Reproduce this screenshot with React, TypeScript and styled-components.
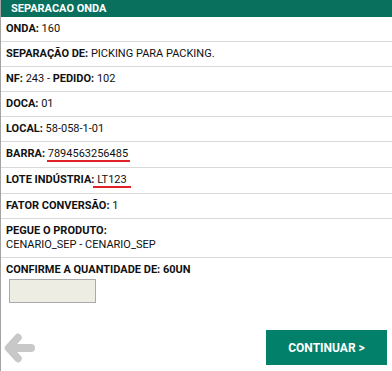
import styled, { createGlobalStyle } from "styled-components";

const GlobalStyle = createGlobalStyle`
  html, body {
    margin: 0;
    padding: 0;
    background: #fff;
  }
  body {
    font-family: Roboto, "Liberation Sans", Arial, sans-serif;
  }
`;

const Page = styled.div`
  min-height: 371px;
  box-sizing: border-box;
  border-left: 1px solid #a3a3a3;
  background: #fff;
`;

const Header = styled.div`
  height: 17px;
  line-height: 17px;
  padding-left: 10px;
  background: #08705c;
  color: #fff;
  font-size: 11px;
  font-weight: 700;
`;

const Row = styled.div<{ $last?: boolean }>`
  padding: 5px 5px;
  border-bottom: ${({ $last }) => ($last ? "none" : "1px solid #d9d9d9")};
  font-size: 11px;
  line-height: 14px;
  color: #111;
`;

const Label = styled.b`
  font-weight: 700;
`;

const Marked = styled.span<{ $before: number; $after: number }>`
  display: inline-block;
  line-height: 12px;
  padding: 0 ${({ $after }) => $after}px 0 ${({ $before }) => $before}px;
  margin-left: ${({ $before }) => -$before}px;
  border-bottom: 2px solid #e0202a;
`;

const QtyInput = styled.input`
  display: block;
  box-sizing: border-box;
  width: 87px;
  height: 24px;
  margin: 2px 0 0 3px;
  background: #eeede3;
  border: 1px solid #aaa;
  outline: none;
`;

const Footer = styled.div`
  display: flex;
  justify-content: space-between;
  align-items: center;
  padding: 22px 5px 0 3px;
`;

const BackButton = styled.button`
  display: flex;
  padding: 0;
  border: none;
  background: none;
  cursor: pointer;
`;

const ContinueButton = styled.button`
  width: 121px;
  height: 35px;
  border: none;
  background: #03806a;
  color: #fff;
  font-family: Roboto, "Liberation Sans", Arial, sans-serif;
  font-size: 12px;
  font-weight: 700;
  cursor: pointer;
`;

function BackArrow() {
  return (
    <svg width="31" height="30" viewBox="0 0 31 30" fill="none">
      <g stroke="#c8c8c8" strokeLinecap="round" strokeLinejoin="round">
        <polyline points="14,4.5 4.5,15 14,25.5" strokeWidth="7.5" />
        <line x1="6" y1="15" x2="27" y2="15" strokeWidth="8" />
      </g>
    </svg>
  );
}

export default function App() {
  return (
    <>
      <GlobalStyle />
      <Page>
        <Header>SEPARACAO ONDA</Header>
        <Row>
          <Label>ONDA:</Label> 160
        </Row>
        <Row>
          <Label>SEPARAÇÃO DE:</Label> PICKING PARA PACKING.
        </Row>
        <Row>
          <Label>NF:</Label> 243 - <Label>PEDIDO:</Label> 102
        </Row>
        <Row>
          <Label>DOCA:</Label> 01
        </Row>
        <Row>
          <Label>LOCAL:</Label> 58-058-1-01
        </Row>
        <Row>
          <Label>BARRA:</Label>{" "}
          <Marked $before={1} $after={2}>7894563256485</Marked>
        </Row>
        <Row>
          <Label>LOTE INDÚSTRIA:</Label>{" "}
          <Marked $before={4} $after={4}>LT123</Marked>
        </Row>
        <Row>
          <Label>FATOR CONVERSÃO:</Label> 1
        </Row>
        <Row>
          <Label>PEGUE O PRODUTO:</Label>
          <br />
          CENARIO_SEP - CENARIO_SEP
        </Row>
        <Row $last>
          <Label>CONFIRME A QUANTIDADE DE: 60UN</Label>
          <QtyInput type="text" />
        </Row>
        <Footer>
          <BackButton aria-label="Voltar">
            <BackArrow />
          </BackButton>
          <ContinueButton>CONTINUAR &gt;</ContinueButton>
        </Footer>
      </Page>
    </>
  );
}
